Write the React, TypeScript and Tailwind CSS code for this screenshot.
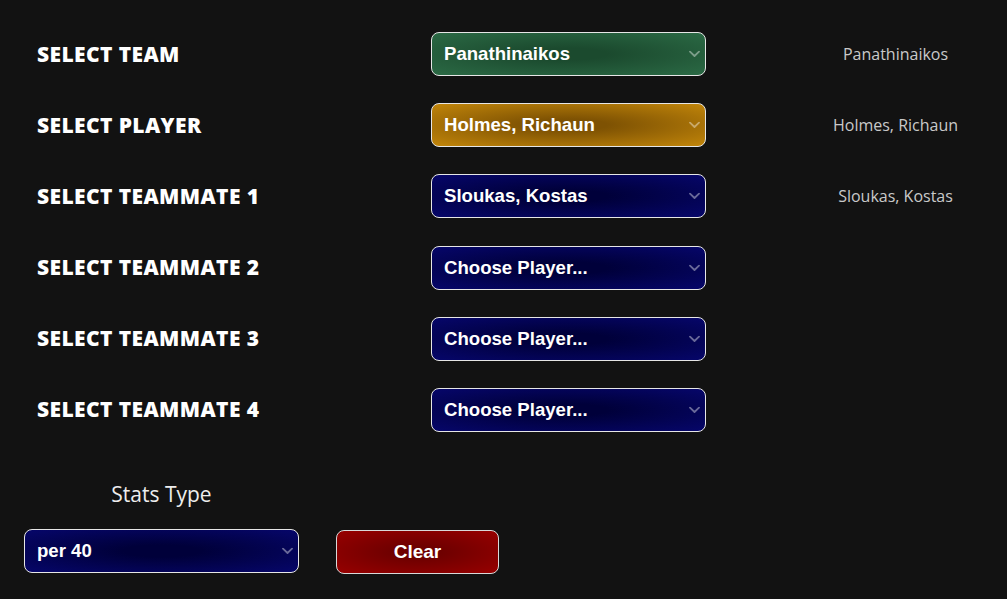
import { useState } from 'react';

interface Row {
    label: string;
    value: string;
    shown: string;
    tone: string;
}

const tones: { [key: string]: string } = {
    green: 'bg-[radial-gradient(ellipse_at_center,#1b4a2e_20%,#2b6a45_100%)]',
    orange: 'bg-[radial-gradient(ellipse_at_center,#7e5203_20%,#c2860a_100%)]',
    blue: 'bg-[radial-gradient(ellipse_at_center,#00003a_20%,#06066a_100%)]',
};

const rows: Row[] = [
    { label: 'SELECT TEAM', value: 'Panathinaikos', shown: 'Panathinaikos', tone: 'green' },
    { label: 'SELECT PLAYER', value: 'Holmes, Richaun', shown: 'Holmes, Richaun', tone: 'orange' },
    { label: 'SELECT TEAMMATE 1', value: 'Sloukas, Kostas', shown: 'Sloukas, Kostas', tone: 'blue' },
    { label: 'SELECT TEAMMATE 2', value: 'Choose Player...', shown: '', tone: 'blue' },
    { label: 'SELECT TEAMMATE 3', value: 'Choose Player...', shown: '', tone: 'blue' },
    { label: 'SELECT TEAMMATE 4', value: 'Choose Player...', shown: '', tone: 'blue' },
];

const Chevron = () => (
    <svg className="pointer-events-none absolute right-[6px] top-1/2 -translate-y-1/2 opacity-40" width="11" height="7" viewBox="0 0 11 7" fill="none">
        <path d="M1 1.2l4.5 4.3 4.5-4.3" stroke="white" strokeWidth="1.8" strokeLinecap="round" strokeLinejoin="round" />
    </svg>
);

const Dropdown = ({ value, tone, width }: { value: string; tone: string; width: string }) => {
    const [val, setVal] = useState(value);
    return (
        <div className={`relative ${width} h-[44px] shrink-0`}>
            <select
                value={val}
                onChange={(e) => setVal(e.target.value)}
                className={`appearance-none w-full h-full rounded-lg border border-[#e6e6e6] pl-[12px] pr-6 text-[18.6px] font-bold text-white font-['Liberation_Sans',Arial,sans-serif] outline-none ${tones[tone]}`}
            >
                <option value={val}>{val}</option>
            </select>
            <Chevron />
        </div>
    );
};

const App = () => {
    return (
        <div className="min-h-[599px] w-full bg-[#121212] font-['Open_Sans',sans-serif]">
            <div className="flex flex-col gap-[27.2px] pt-[32px]">
                {rows.map((r) => (
                    <div key={r.label} className="flex items-center">
                        <div className="w-[431px] pl-[37px] text-[21px] font-extrabold tracking-[0.4px] text-white leading-none">{r.label}</div>
                        <Dropdown value={r.value} tone={r.tone} width="w-[275px]" />
                        <div className="flex-1 pl-[78px] text-center text-[16px] text-[#c9c9c9]">{r.shown}</div>
                    </div>
                ))}
            </div>

            <div className="flex items-end gap-[37px] pl-[24px] pt-[47px]">
                <div className="flex w-[275px] flex-col items-center gap-[19px]">
                    <span className="text-[21px] text-[#ededed]">Stats Type</span>
                    <Dropdown value="per 40" tone="blue" width="w-[275px]" />
                </div>
                <button className="mb-[-1px] h-[44px] w-[163px] rounded-lg border border-[#d9d9d9] bg-[radial-gradient(ellipse_at_center,#6e0000_20%,#980000_100%)] text-[19px] font-bold text-white font-['Liberation_Sans',Arial,sans-serif]">
                    Clear
                </button>
            </div>
        </div>
    );
};

export default App;
